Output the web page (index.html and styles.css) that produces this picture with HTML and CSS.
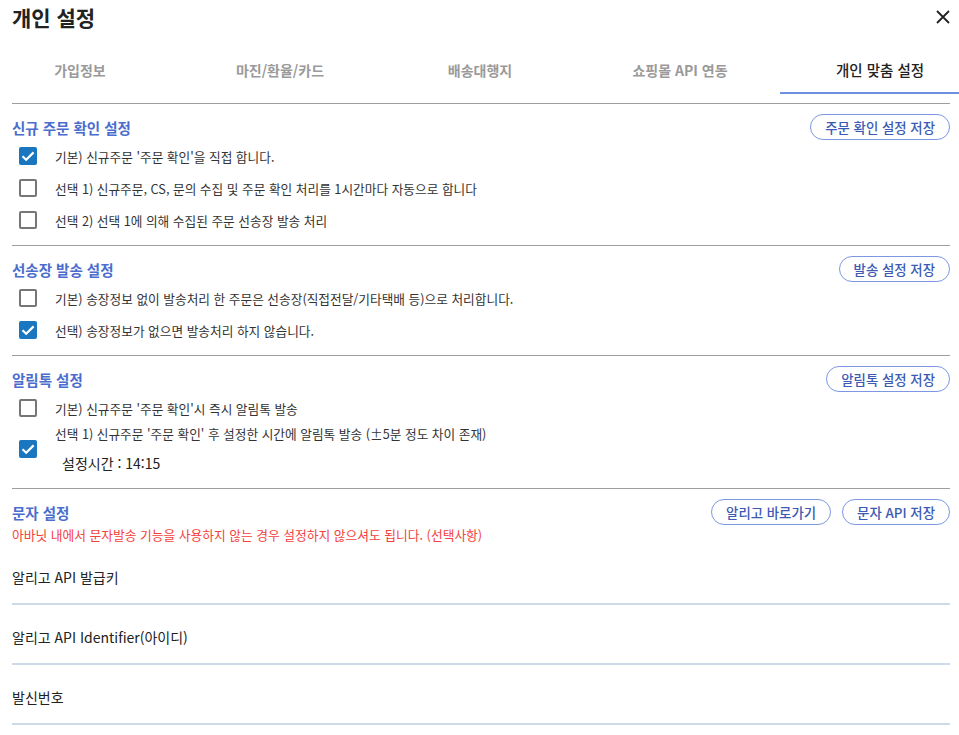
FILE: index.html
```html
<!DOCTYPE html>
<html lang="ko">
<head>
    <meta charset="UTF-8">
    <meta name="viewport" content="width=device-width, initial-scale=1">
    <title>개인 설정</title>
    <link rel="stylesheet" href="styles.css">
</head>
<body>
    <div class="modal">
        <div class="modalHead">
            <h1>개인 설정</h1>
            <a class="closeBtn">
                <svg width="16" height="16" viewBox="0 0 16 16"><path d="M2 2L14 14M14 2L2 14" stroke="#222" stroke-width="1.8" fill="none"/></svg>
            </a>
        </div>

        <div class="tabs">
            <a class="tab">가입정보</a>
            <a class="tab">마진/환율/카드</a>
            <a class="tab">배송대행지</a>
            <a class="tab">쇼핑몰 API 연동</a>
            <a class="tab active">개인 맞춤 설정</a>
        </div>

        <!-- 신규 주문 -->
        <div class="group">
            <div class="groupHead">
                <h2>신규 주문 확인 설정</h2>
                <div class="btnGroup">
                    <a class="btn">주문 확인 설정 저장</a>
                </div>
            </div>
            <div class="opt"><span class="chk on"></span><span>기본) 신규주문 '주문 확인'을 직접 합니다.</span></div>
            <div class="opt"><span class="chk"></span><span>선택 1) 신규주문, CS, 문의 수집 및 주문 확인 처리를 1시간마다 자동으로 합니다</span></div>
            <div class="opt"><span class="chk"></span><span>선택 2) 선택 1에 의해 수집된 주문 선송장 발송 처리</span></div>
        </div>

        <!-- 선송장 -->
        <div class="group">
            <div class="groupHead">
                <h2>선송장 발송 설정</h2>
                <div class="btnGroup">
                    <a class="btn">발송 설정 저장</a>
                </div>
            </div>
            <div class="opt"><span class="chk"></span><span>기본) 송장정보 없이 발송처리 한 주문은 선송장(직접전달/기타택배 등)으로 처리합니다.</span></div>
            <div class="opt"><span class="chk on"></span><span>선택) 송장정보가 없으면 발송처리 하지 않습니다.</span></div>
        </div>

        <!-- 알림톡 -->
        <div class="group">
            <div class="groupHead">
                <h2>알림톡 설정</h2>
                <div class="btnGroup">
                    <a class="btn">알림톡 설정 저장</a>
                </div>
            </div>
            <div class="opt"><span class="chk"></span><span>기본) 신규주문 '주문 확인'시 즉시 알림톡 발송</span></div>
            <div class="opt optTall">
                <span class="chk on"></span>
                <div>
                    <div class="optLine">선택 1) 신규주문 '주문 확인' 후 설정한 시간에 알림톡 발송 (±5분 정도 차이 존재)</div>
                    <div class="optTime">설정시간 : 14:15</div>
                </div>
            </div>
        </div>

        <!-- 문자 -->
        <div class="group last">
            <div class="groupHead">
                <h2>문자 설정</h2>
                <div class="btnGroup">
                    <a class="btn">알리고 바로가기</a>
                    <a class="btn">문자 API 저장</a>
                </div>
            </div>
            <p class="notice">아바닛 내에서 문자발송 기능을 사용하지 않는 경우 설정하지 않으셔도 됩니다. (선택사항)</p>
            <div class="field">알리고 API 발급키</div>
            <div class="field">알리고 API Identifier(아이디)</div>
            <div class="field">발신번호</div>
        </div>
    </div>
</body>
</html>
```

FILE: styles.css
```css
body,html {
    margin: 0;
    width: 100%;
    height: 100%;
    overflow: hidden;
    background: #fff;
}
body {
    font-family: "Noto Sans CJK KR", "Noto Sans", sans-serif;
    color: #222;
}
a {
    text-decoration: none;
    cursor: pointer;
}
.modal {
    padding: 0 9px 0 12px;
}
.modalHead {
    display: flex;
    justify-content: space-between;
    align-items: center;
    height: 34px;
}
.modalHead h1 {
    margin: 0;
    font-size: 21px;
    font-weight: 700;
    line-height: 34px;
}
.closeBtn {
    display: flex;
    margin-right: -1px;
}
.tabs {
    display: flex;
    margin: 14px -9px 0 -32px;
}
.tab {
    flex: none;
    box-sizing: border-box;
    width: 200px;
    height: 46px;
    line-height: 44px;
    text-align: center;
    font-size: 14px;
    font-weight: 700;
    color: #9a9a9a;
    border-bottom: 2px solid transparent;
}
.tab.active {
    color: #222;
    font-size: 14.5px;
    font-weight: 500;
    border-bottom-color: #6f8fe2;
}
.group {
    border-top: 1px solid #9e9e9e;
    padding: 10px 0 9px;
}
.tabs + .group {
    margin-top: 9px;
}
.group.last {
    padding-bottom: 0;
}
.groupHead {
    display: flex;
    justify-content: space-between;
    align-items: center;
    height: 26px;
}
.groupHead h2 {
    margin: 0;
    font-size: 14.5px;
    font-weight: 700;
    color: #4b6dcd;
}
.btnGroup {
    display: flex;
    gap: 11px;
}
.btn {
    box-sizing: border-box;
    height: 26px;
    line-height: 24px;
    padding: 0 14px;
    border: 1px solid #7d98e3;
    border-radius: 13px;
    font-size: 13.4px;
    font-weight: 500;
    color: #3c5ab4;
}
.opt {
    display: flex;
    align-items: center;
    height: 32px;
    font-size: 12.7px;
    color: #333;
}
.opt.optTall {
    height: auto;
    padding-bottom: 5px;
}
.optLine {
    line-height: 20px;
}
.optTime {
    margin: 8px 0 0 7px;
    font-size: 14px;
    line-height: 22px;
    color: #222;
}
.chk {
    flex: none;
    box-sizing: border-box;
    width: 18px;
    height: 18px;
    margin: 0 18px 0 7px;
    border: 2px solid #767676;
    border-radius: 2px;
    background: #fff;
}
.chk.on {
    border: none;
    background: #1a76be url("data:image/svg+xml;utf8,<svg xmlns='http://www.w3.org/2000/svg' width='18' height='18' viewBox='0 0 18 18'><path d='M3.5 9.2L7.2 12.8L14.6 5.4' stroke='white' stroke-width='2.2' fill='none'/></svg>") no-repeat center;
}
.notice {
    margin: 0;
    font-size: 12.75px;
    line-height: 20px;
    color: #f4413b;
}
.field {
    height: 58px;
    line-height: 64px;
    font-size: 14px;
    color: #222;
    border-bottom: 2px solid #cddae7;
}
```
